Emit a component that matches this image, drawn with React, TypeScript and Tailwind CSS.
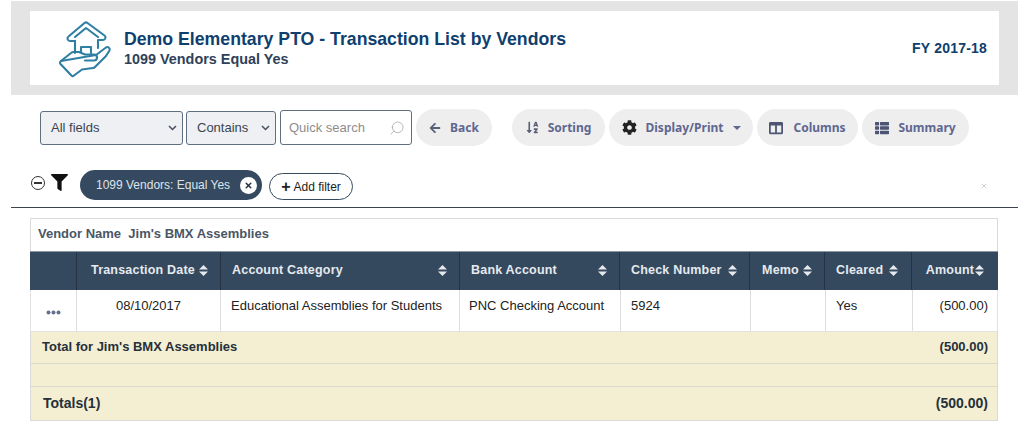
import { Search, X } from "lucide-react";
import { FaArrowLeft, FaCog, FaColumns, FaFilter, FaSortAlphaDown, FaThList } from "react-icons/fa";

const sans = "font-['Liberation_Sans',Arial,sans-serif]";

const columns = [
  { label: "", width: "w-[47px]", className: "" },
  { label: "Transaction Date", width: "w-[144px]", className: "pl-[14px] gap-1" },
  { label: "Account Category", width: "w-[239px]", className: "justify-between pl-[11px] pr-[12px]" },
  { label: "Bank Account", width: "w-[160px]", className: "justify-between pl-[11px] pr-[12px]" },
  { label: "Check Number", width: "w-[130px]", className: "pl-[11px] gap-[6px]" },
  { label: "Memo", width: "w-[75px]", className: "justify-center gap-1" },
  { label: "Cleared", width: "w-[87px]", className: "pl-[11px] gap-[6px]" },
  { label: "Amount", width: "w-[86px]", className: "justify-center gap-[1px]" },
];

// viewBox uses page coordinates so the strokes can be read straight off the screenshot
function HouseLogo() {
  return (
    <svg width="62" height="62" viewBox="58 17 62 62" fill="none" stroke="#2f7fa3" strokeWidth="2.1" strokeLinecap="round" strokeLinejoin="round">
      <path d="M75 41 H70 a2.5 2.5 0 0 1 -1.5 -4.5 L84.5 23 a2.5 2.5 0 0 1 3 0 L104.5 35.5 a2.5 2.5 0 0 1 -1.5 4.5 H98 V48" />
      <path d="M75 41 V53" />
      <path d="M75 37 L86 28 L98 37" />
      <path d="M81 52 V47 H91 V53" />
      <path d="M61 61 L71 53 a4 4 0 0 1 3 -1 H79 L85 54.5 H94 a2.8 2.8 0 0 1 0 6 H85" />
      <path d="M96 55 L106 47.5 a2.4 2.4 0 0 1 3.5 3 L106 56 L95 67 a3 3 0 0 1 -2 1 L82 69.5 L74 75.5 a2 2 0 0 1 -2.6 0 L60.5 64 a2 2 0 0 1 .5 -3 Z" />
    </svg>
  );
}

function SortArrows() {
  return (
    <svg width="9" height="11" viewBox="0 0 9 11" fill="#e6e9ee" className="shrink-0">
      <path d="M4.5 0 L9 4.6 H0 Z M0 6.4 H9 L4.5 11 Z" />
    </svg>
  );
}

function ToolButton({ width, gap, children, label }: { width: string; gap: string; children: React.ReactNode; label: string }) {
  return (
    <button className={`${width} ${gap} flex h-[37px] items-center justify-center rounded-full bg-[#eeeeee] font-['Noto_Sans',sans-serif] text-[12px] font-bold text-[#5f6791]`}>
      {children}
      <span>{label}</span>
    </button>
  );
}

function Chevron() {
  return (
    <svg width="9" height="6" viewBox="0 0 9 6" fill="none" stroke="#44505f" strokeWidth="1.5">
      <path d="M1 1 L4.5 4.5 L8 1" />
    </svg>
  );
}

function SelectBox({ width, label, pad }: { width: string; label: string; pad: string }) {
  return (
    <div className={`${width} ${pad} flex h-[34px] items-center justify-between rounded-[3px] border border-[#5f6f80] bg-[#eff0f4] text-[13px] text-[#3a4450]`}>
      <span>{label}</span>
      <Chevron />
    </div>
  );
}

export default function App() {
  return (
    <div className={`h-[440px] w-[1024px] overflow-hidden bg-white ${sans}`}>
      {/* page title */}
      <div className="ml-[11px] mt-[1px] w-[1007px] bg-[#e4e4e4] px-[19px] py-[10px]">
        <div className="flex h-[74px] items-center justify-between bg-white pl-[28px] pr-[12px]">
          <div className="flex items-center gap-[4px]">
            <HouseLogo />
            <div>
              <div className="text-[17.7px] font-bold leading-[20px] text-[#0f3f6e]">
                Demo Elementary PTO - Transaction List by Vendors
              </div>
              <div className="mt-[1px] text-[14.4px] font-bold leading-[18px] text-[#2f4158]">
                1099 Vendors Equal Yes
              </div>
            </div>
          </div>
          <div className="text-[14px] font-bold tracking-[0.2px] text-[#0f3f6e]">FY 2017-18</div>
        </div>
      </div>

      {/* toolbar */}
      <div className="ml-[40px] mt-[14px] flex h-[37px] items-center">
        <SelectBox width="w-[143px]" label="All fields" pad="pl-[10px] pr-[5px]" />
        <div className="w-[3px]" />
        <SelectBox width="w-[90px]" label="Contains" pad="pl-[10px] pr-[5px]" />
        <div className="w-[4px]" />
        <div className="flex h-[35px] w-[132px] items-center justify-between rounded-[3px] border border-[#5f6f80] bg-white pl-[8px] pr-[6px] text-[13px] text-[#8d8d8d]">
          <span>Quick search</span>
          <Search size={16} strokeWidth={1.2} color="#a8a8a8" className="-scale-x-100" />
        </div>
        <div className="w-[4px]" />
        <ToolButton width="w-[76px]" gap="gap-[9px]" label="Back">
          <FaArrowLeft size={12} color="#56617c" />
        </ToolButton>
        <div className="w-[20px]" />
        <ToolButton width="w-[93px]" gap="gap-[9px]" label="Sorting">
          <FaSortAlphaDown size={13} color="#5a5f78" />
        </ToolButton>
        <div className="w-[4px]" />
        <button className="flex h-[37px] w-[144px] items-center justify-center gap-[9px] rounded-full bg-[#eeeeee] font-['Noto_Sans',sans-serif] text-[12px] font-bold text-[#5f6791]">
          <FaCog size={15} color="#222222" />
          <span>Display/Print</span>
          <span className="h-0 w-0 border-x-[4px] border-t-[4px] border-x-transparent border-t-[#5f6791]" />
        </button>
        <div className="w-[4px]" />
        <ToolButton width="w-[101px]" gap="gap-[10px]" label="Columns">
          <FaColumns size={14} color="#4d5474" />
        </ToolButton>
        <div className="w-[4px]" />
        <ToolButton width="w-[107px]" gap="gap-[9px]" label="Summary">
          <FaThList size={14} color="#4d5474" />
        </ToolButton>
      </div>

      {/* active filters */}
      <div className="ml-[11px] mt-[15px] flex h-[47px] w-[1007px] items-start border-b border-[#3d4650] pl-[20px] pr-[30px] pt-[9px]">
        <div className="mt-[6px] flex h-[14px] w-[14px] items-center justify-center rounded-full border-[1.5px] border-[#333333]">
          <div className="h-[1.5px] w-[8px] bg-[#333333]" />
        </div>
        <FaFilter size={17} color="#111111" className="ml-[6px] mt-[4px]" />
        <div className="ml-[12px] flex h-[30px] w-[182px] items-center justify-between rounded-full bg-[#354a60] pl-[16px] pr-[5px] text-[12px] text-[#dfe4ea]">
          <span>1099 Vendors: Equal Yes</span>
          <span className="flex h-[17px] w-[17px] items-center justify-center rounded-full bg-white">
            <X size={9} strokeWidth={4} color="#24303c" />
          </span>
        </div>
        <div className="ml-[7px] mt-[3px] flex h-[27px] w-[84px] items-center justify-center gap-[3px] rounded-full border border-[#354a60] bg-white text-[12px] text-[#222222]">
          <span className="text-[16px] font-bold leading-none">+</span>
          <span>Add filter</span>
        </div>
        <X size={8} strokeWidth={2} color="#b5b5b5" className="ml-auto mt-[12px]" />
      </div>

      {/* report table */}
      <div className="ml-[30px] mt-[10px] w-[968px] border-x border-t border-[#d9d9d9]">
        <div className="flex h-[32px] items-center pb-[2px] pl-[7px] text-[13px] font-bold text-[#4a5666]">
          Vendor Name&nbsp;&nbsp;Jim's BMX Assemblies
        </div>
      </div>
      <div className="ml-[30px] w-[968px]">
        <div className="flex h-[39px] border-t border-[#8a96a3] bg-[#34495e]">
          {columns.map((col) => (
            <div
              key={col.label}
              className={`${col.width} ${col.className} flex items-center border-r border-[#243444] pb-[2px] text-[12.5px] font-bold tracking-[0.2px] text-[#e6e9ee] last:border-r-0`}
            >
              {col.label && <span>{col.label}</span>}
              {col.label && <SortArrows />}
            </div>
          ))}
        </div>
        <div className="flex h-[42px] border-b border-l border-r border-[#e2e2e2] text-[13px] text-[#222222]">
          <div className="flex w-[46px] items-center justify-center border-r border-[#dddddd] pt-[3px]">
            <svg width="15" height="5" viewBox="0 0 15 5" fill="#66708c">
              <circle cx="2.5" cy="2.5" r="2" />
              <circle cx="7.5" cy="2.5" r="2" />
              <circle cx="12.5" cy="2.5" r="2" />
            </svg>
          </div>
          <div className="w-[144px] border-r border-[#dddddd] pt-[6px] text-center">08/10/2017</div>
          <div className="w-[239px] border-r border-[#dddddd] pl-[10px] pt-[6px]">Educational Assemblies for Students</div>
          <div className="w-[161px] border-r border-[#dddddd] pl-[9px] pt-[6px]">PNC Checking Account</div>
          <div className="w-[130px] border-r border-[#dddddd] pl-[10px] pt-[6px]">5924</div>
          <div className="w-[75px] border-r border-[#dddddd]" />
          <div className="w-[87px] border-r border-[#dddddd] pl-[10px] pt-[6px]">Yes</div>
          <div className="flex-1 pr-[9px] pt-[6px] text-right">(500.00)</div>
        </div>
        <div className="border-x border-b border-[#d9d9d9] bg-[#f4efd3] font-bold text-[#26303a]">
          <div className="flex h-[32px] items-center justify-between border-b border-[#d9d9d0] pb-[2px] pl-[11px] pr-[9px] text-[13px]">
            <span>Total for Jim's BMX Assemblies</span>
            <span>(500.00)</span>
          </div>
          <div className="h-[23px] border-b border-[#d9d9d0]" />
          <div className="flex h-[33px] items-center justify-between pl-[12px] pr-[9px] text-[14px]">
            <span>Totals(1)</span>
            <span>(500.00)</span>
          </div>
        </div>
      </div>
    </div>
  );
}
